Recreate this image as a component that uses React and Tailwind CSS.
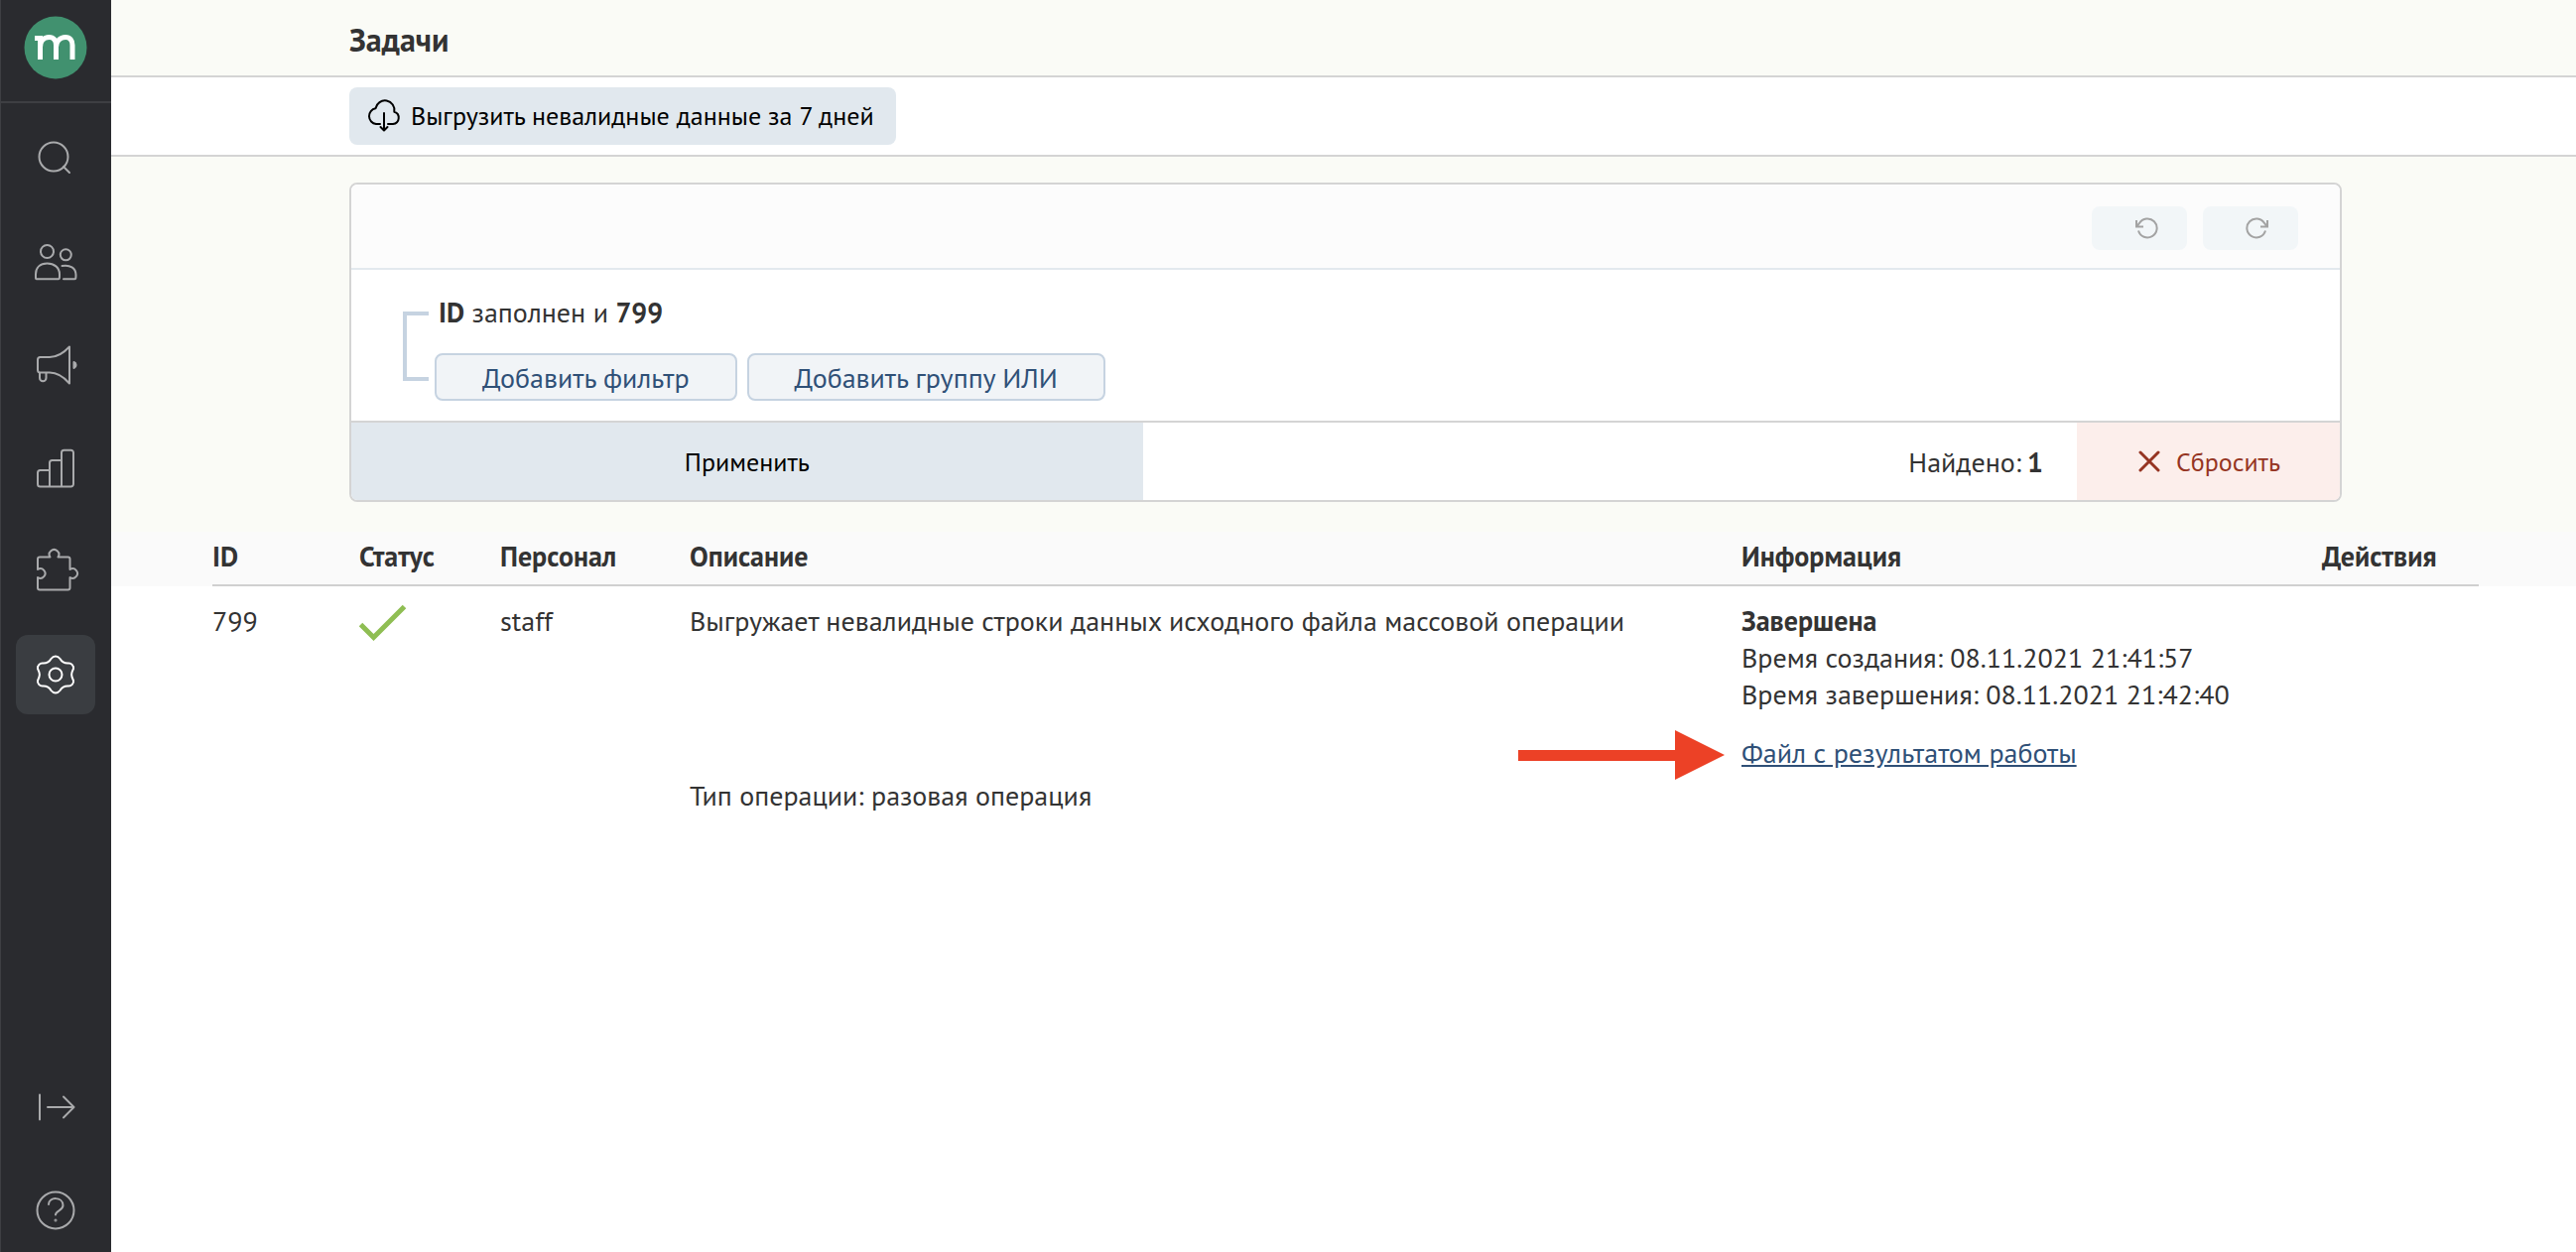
import React from 'react';

function Icon({ children, className = 'size-12', ...rest }) {
  return (
    <svg
      viewBox="0 0 48 48"
      className={className}
      fill="none"
      stroke="currentColor"
      strokeWidth="2"
      strokeLinecap="round"
      strokeLinejoin="round"
      aria-hidden="true"
      {...rest}
    >
      {children}
    </svg>
  );
}

const icons = {
  search: (
    <Icon>
      <circle cx="22" cy="22" r="14.5" />
      <path d="M32 32l6 6" />
    </Icon>
  ),
  clients: (
    <Icon>
      <circle cx="15.5" cy="13.5" r="6.5" />
      <circle cx="34.300" cy="16.800" r="5.500" />
      <path d="M5 41.300c-1.300 0-1-.8-1-4.800C4 29.500 8.500 25.500 15.500 25.500S28 29.500 28 36.500c0 4 0 4.800-1 4.800z" />
      <path d="M30.500 28c8-1.500 14 2 14 9 0 3.500 0 4.300-1.500 4.300H32" />
    </Icon>
  ),
  campaigns: (
    <Icon>
      <path d="M38 5.500v37c-6-7-12-11-20-11H8.500A2.500 2.500 0 0 1 6 29V18.500A2.500 2.500 0 0 1 8.500 16H18c8 0 14-4 20-10.500z" />
      <path d="M8 32v5a3.200 3.200 0 0 0 6.500 0v-5" />
      <path d="M42.500 21a3.200 3.200 0 0 1 0 6z" fill="currentColor" />
    </Icon>
  ),
  reports: (
    <Icon>
      <path d="M6 28.500A2.500 2.500 0 0 1 8.500 26H18V18.500a2.500 2.500 0 0 1 2.500-2.500H30V8.300a2.500 2.500 0 0 1 2.500-2.500h7A2.500 2.500 0 0 1 42 8.300V40a2.500 2.500 0 0 1-2.500 2.500h-31A2.500 2.500 0 0 1 6 40zM18 26v16.500M30 16v26.500" />
    </Icon>
  ),
  integrations: (
    <Icon>
      <path d="M6 22V11.500a2 2 0 0 1 2-2H18.500a4.800 4.800 0 1 1 8 0H36.500a2 2 0 0 1 2 2V22a4.800 4.800 0 1 1 0 8V40.500a2 2 0 0 1-2 2H8a2 2 0 0 1-2-2V30a4.800 4.800 0 1 0 0-8z" />
    </Icon>
  ),
  settings: (
    <Icon>
      <path d="M24 5.500c2 0 3 .5 4.500 2.500 2 3.500 4 4.800 8.500 4.500 3-.2 5.500 2.500 5 5.500-2.500 5-2.500 7 0 12 .5 3-2 5.700-5 5.500-4.500-.3-6.500 1-8.500 4.500-1.500 2-2.500 2.500-4.500 2.500s-3-.5-4.500-2.500c-2-3.500-4-4.800-8.500-4.500-3 .2-5.500-2.500-5-5.500 2.500-5 2.500-7 0-12-.5-3 2-5.700 5-5.500 4.500.3 6.500-1 8.500-4.500 1.500-2 2.500-2.500 4.500-2.500z" />
      <circle cx="24" cy="24" r="6.500" />
    </Icon>
  ),
  expand: (
    <Icon>
      <path d="M8 11.500v25M16 24h26M32 13.500L42.500 24 32 34.500" />
    </Icon>
  ),
  help: (
    <Icon>
      <circle cx="24" cy="24" r="18.500" />
      <path d="M17 18c0-8 14.500-8 14.500 1 0 5.500-7.500 5-7.500 9.500" />
      <circle cx="24" cy="34" r="0.500" />
    </Icon>
  ),
};

function NavItem({ icon, label, active }) {
  return (
    <a
      href="#"
      aria-label={label}
      aria-current={active ? 'page' : undefined}
      className={
        active
          ? 'flex size-20 items-center justify-center rounded-xl bg-[#3a3d41] text-white'
          : 'flex size-20 items-center justify-center rounded-xl text-[#a9aaac]'
      }
    >
      {icons[icon]}
    </a>
  );
}

function Sidebar() {
  return (
    <aside className="flex w-28 shrink-0 flex-col bg-[#2a2b2f] shadow-[inset_1px_0_#3e3f43]">
      <a href="#" aria-label="Главная" className="flex h-26 items-center justify-center border-b-2 border-[#3e3f43] pb-1.5">
        <svg viewBox="0 0 64 64" className="size-16" aria-hidden="true">
          <circle cx="32" cy="32" r="31.500" fill="#41916f" />
          <path d="M11 22.500h6M16.500 44V20M32.500 44V29.500c0-5-2.500-8-7-8-5.500 0-9 4-9 10M49 44V29.500c0-5-2.500-8-7-8-5.500 0-9.500 4-9.500 10" fill="none" stroke="#fff" strokeWidth="5" />
        </svg>
      </a>
      <nav className="flex grow flex-col items-center gap-6 pt-4">
        <NavItem icon="search" label="Поиск" />
        <NavItem icon="clients" label="Клиенты" />
        <NavItem icon="campaigns" label="Кампании" />
        <NavItem icon="reports" label="Отчёты" />
        <NavItem icon="integrations" label="Интеграции" />
        <NavItem icon="settings" label="Настройки" active />
      </nav>
      <div className="flex flex-col items-center gap-6 pb-0.5">
        <NavItem icon="expand" label="Развернуть меню" />
        <NavItem icon="help" label="Помощь" />
      </div>
    </aside>
  );
}

function HistoryButton({ label, mirrored }) {
  return (
    <button type="button" aria-label={label} className="flex h-11 w-24 items-center justify-center rounded-lg bg-[#f2f6f8] pl-3.5 text-[#a3a3a3]">
      <svg viewBox="0 0 24 24" className={mirrored ? 'size-6 -scale-x-100' : 'size-6'} fill="none" stroke="currentColor" strokeWidth="2" aria-hidden="true">
        <path d="M4 14.500a9.500 9.500 0 1 0 1-7.500L2.500 10M2 4v6.500h7" />
      </svg>
    </button>
  );
}

function FilterPanel() {
  return (
    <section className="overflow-hidden rounded-lg border-2 border-[#d4d4d4] bg-white">
      <div className="flex justify-end gap-4 border-b-2 border-[#e3e9ee] bg-[#fcfcfc] pt-[22px] pr-[42px] pb-[18px]">
        <HistoryButton label="Отменить" />
        <HistoryButton label="Повторить" mirrored />
      </div>
      <div className="flex items-stretch gap-1.5 pt-6 pb-5 pl-13">
        <div className="mt-[18px] mb-5 w-[26px] border-y-4 border-l-4 border-[#c6d3e1]" />
        <div>
          <p className="pl-1">
            <b>ID</b> заполнен и <b>799</b>
          </p>
          <div className="mt-[23px] flex gap-2.5 text-[#2f5077]">
            <button type="button" className="h-12 rounded-lg border-2 border-[#c6d3e1] bg-[#f1f4f7] px-[46px]">Добавить фильтр</button>
            <button type="button" className="h-12 rounded-lg border-2 border-[#c6d3e1] bg-[#f1f4f7] px-[46px]">Добавить группу ИЛИ</button>
          </div>
        </div>
      </div>
      <div className="flex h-20 items-stretch border-t-2 border-[#d4d4d4]">
        <button type="button" className="w-[39.8%] bg-[#e1e8ee] text-[26px] text-black">Применить</button>
        <p className="ml-auto flex items-center gap-1.5 pr-[34px]">
          Найдено: <b>1</b>
        </p>
        <button type="button" className="flex items-center gap-4 bg-[#fceeeb] pr-[60px] pl-[62px] text-[26px] text-[#953422]">
          <svg viewBox="0 0 22 22" className="size-[22px]" fill="none" stroke="currentColor" strokeWidth="3" strokeLinecap="round" aria-hidden="true">
            <path d="M2 2l18 18M20 2L2 20" />
          </svg>
          Сбросить
        </button>
      </div>
    </section>
  );
}

const columns = [
  { title: 'ID', cell: 'w-[250px] pl-[102px]' },
  { title: 'Статус', cell: 'w-[142px]' },
  { title: 'Персонал', cell: 'w-[191px]' },
  { title: 'Описание', cell: '' },
  { title: 'Информация', cell: 'w-[585px]' },
  { title: 'Действия', cell: 'w-[256px] pr-[98px]' },
];

function TaskTable() {
  return (
    <table className="w-full table-fixed text-left">
      <thead className="bg-[#fafafa]">
        <tr>
          {columns.map((c) => (
            <th key={c.title} scope="col" className={c.cell}>
              <div className="h-[55px] border-b-2 border-[#d0d0d0] pt-1.5">{c.title}</div>
            </th>
          ))}
        </tr>
      </thead>
      <tbody>
        <tr className="align-top">
          <td className="pt-4 pl-[102px]">799</td>
          <td className="pt-[18px]">
            <svg viewBox="0 0 48 38" className="h-[38px] w-12" fill="none" stroke="#8fbe53" strokeWidth="5" role="img" aria-label="Выполнено">
              <path d="M1.500 20.500l13 13L45.500 2.500" />
            </svg>
          </td>
          <td className="pt-4">staff</td>
          <td className="pt-4">
            <p>Выгружает невалидные строки данных исходного файла массовой операции</p>
            <p className="mt-[139px]">Тип операции: разовая операция</p>
          </td>
          <td className="pt-4">
            <b>Завершена</b>
            <p>Время создания: 08.11.2021 21:41:57</p>
            <p>Время завершения: 08.11.2021 21:42:40</p>
            <div className="relative mt-[22px]">
              <svg viewBox="0 0 208 50" className="absolute top-[-4px] right-full mr-[17px] h-[50px] w-[208px]" fill="#ec4126" aria-hidden="true">
                <path d="M0 20h158V0l50 25-50 25V31H0z" />
              </svg>
              <a href="#" className="text-[#2f5077] underline">Файл с результатом работы</a>
            </div>
          </td>
          <td />
        </tr>
      </tbody>
    </table>
  );
}

export default function App() {
  return (
    <div className="flex min-h-screen bg-white font-['PT_Sans','Noto_Sans',sans-serif] text-[28px] leading-[37px] text-[#333]">
      <Sidebar />
      <main className="grow">
        <header className="flex h-[78px] items-center border-b-2 border-[#d4d4d4] bg-[#fafbf6] pt-1 pl-60">
          <h1 className="text-[32px] font-bold">Задачи</h1>
        </header>
        <div className="flex h-20 items-center border-b-2 border-[#d4d4d4] pl-60">
          <button type="button" className="flex h-[58px] items-center gap-2.5 rounded-lg bg-[#e1e8ee] pr-[22px] pb-0.5 pl-4 text-[26px] text-black">
            <svg viewBox="0 0 36 36" className="size-9" fill="none" stroke="currentColor" strokeWidth="2" strokeLinecap="round" strokeLinejoin="round" aria-hidden="true">
              <path d="M15 27H11A8 8 0 0 1 10.500 11.200a9.500 9.500 0 0 1 18.800 3.500A6.300 6.300 0 0 1 28 27H23M19 16v17M15.500 30l3.500 3.500 3.500-3.500" />
            </svg>
            Выгрузить невалидные данные за 7 дней
          </button>
        </div>
        <div className="bg-[#fafbf6] pt-[26px] pr-[236px] pb-[30px] pl-60">
          <FilterPanel />
        </div>
        <TaskTable />
      </main>
    </div>
  );
}
